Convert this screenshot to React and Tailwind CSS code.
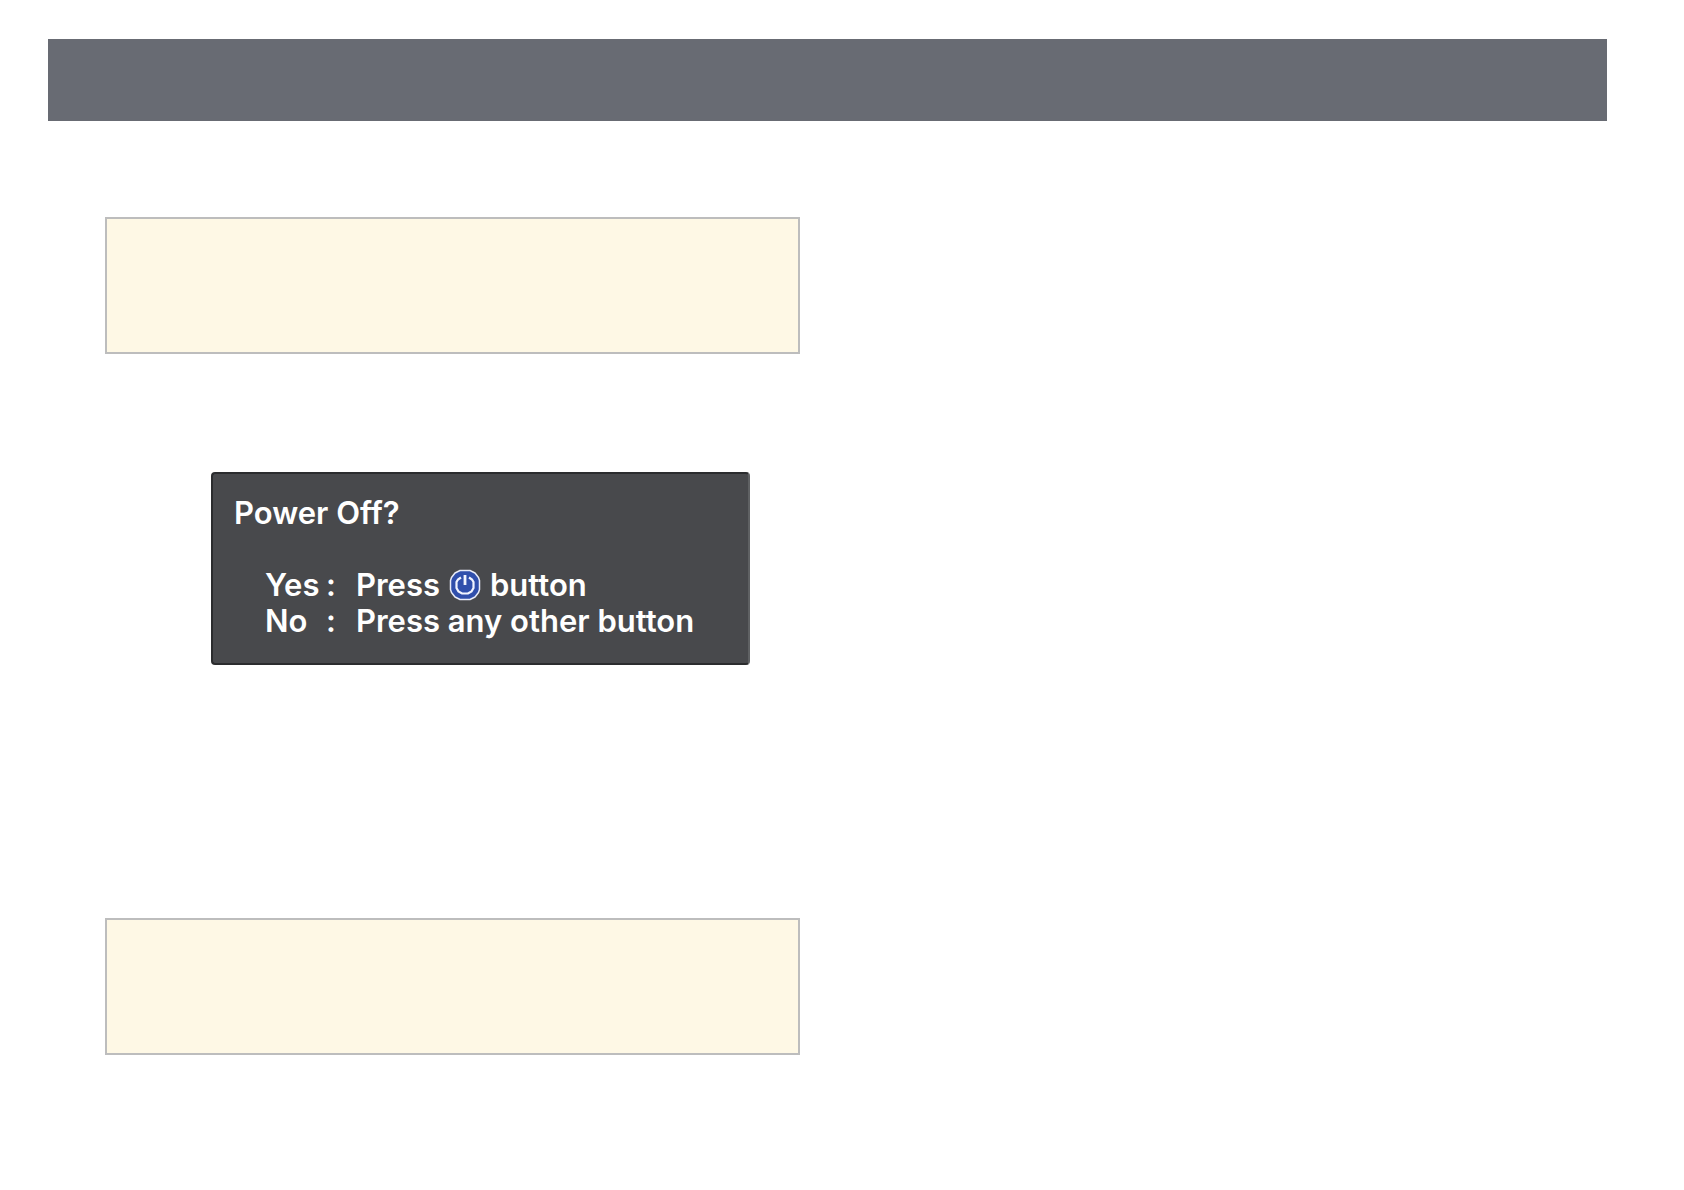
import React from 'react';

const PowerIcon = () => (
  <svg viewBox="0 0 32 32" className="w-8 h-8 shrink-0" role="img" aria-label="Power">
    <path
      d="M11 1.5h10l5 2.500 3.500 4.500 1 3v9l-1 3-3.500 4.500-5 2.500H11l-5-2.500-3.500-4.500-1-3v-9l1-3L6 4z"
      fill="#304fac"
      stroke="#e8ebf8"
      strokeWidth="1.5"
      strokeLinejoin="round"
    />
    <path
      d="M12 8.500L9 10.500 7.500 13v6l2 3.500 3.500 2h6l3.500-2 2-3.500v-6L23 10.500l-3-2"
      fill="none"
      stroke="#f1f4ff"
      strokeWidth="2.2"
    />
    <path d="M16 6v10" fill="none" stroke="#f1f4ff" strokeWidth="2.8" />
  </svg>
);

const Note = () => <aside className="h-[137px] border-2 border-[#bdbdbd] bg-[#fef8e5]" />;

const PowerOffMessage = () => (
  <section className="max-w-[539px] ml-[106px] px-[21px] pt-[21px] pb-6 rounded-sm border-2 border-t-[#2b2c2e] border-l-[#2b2c2e] border-r-[#5f6163] border-b-[#2b2c2e] bg-[#48494c] text-white text-[31px] leading-9">
    <h1 className="mb-9 font-semibold">Power Off?</h1>
    <dl className="pl-[31px] grid grid-cols-[61px_30px_1fr] font-semibold whitespace-nowrap">
      <dt>Yes</dt>
      <dd>:</dd>
      <dd className="flex items-center gap-[9px]">
        Press <PowerIcon /> button
      </dd>
      <dt>No</dt>
      <dd>:</dd>
      <dd>Press any other button</dd>
    </dl>
  </section>
);

const App = () => (
  <div className="min-h-screen bg-white pt-[39px] pl-12 pr-[77px] font-['Inter','Liberation_Sans',sans-serif]">
    <header className="h-[82px] bg-[#686b73]" />
    <main className="grid grid-cols-2 gap-[55px] pt-24 pb-12">
      <div className="pl-[57px]">
        <Note />
        <div className="pt-[118px] pb-[253px]">
          <PowerOffMessage />
        </div>
        <Note />
      </div>
    </main>
  </div>
);

export default App;
